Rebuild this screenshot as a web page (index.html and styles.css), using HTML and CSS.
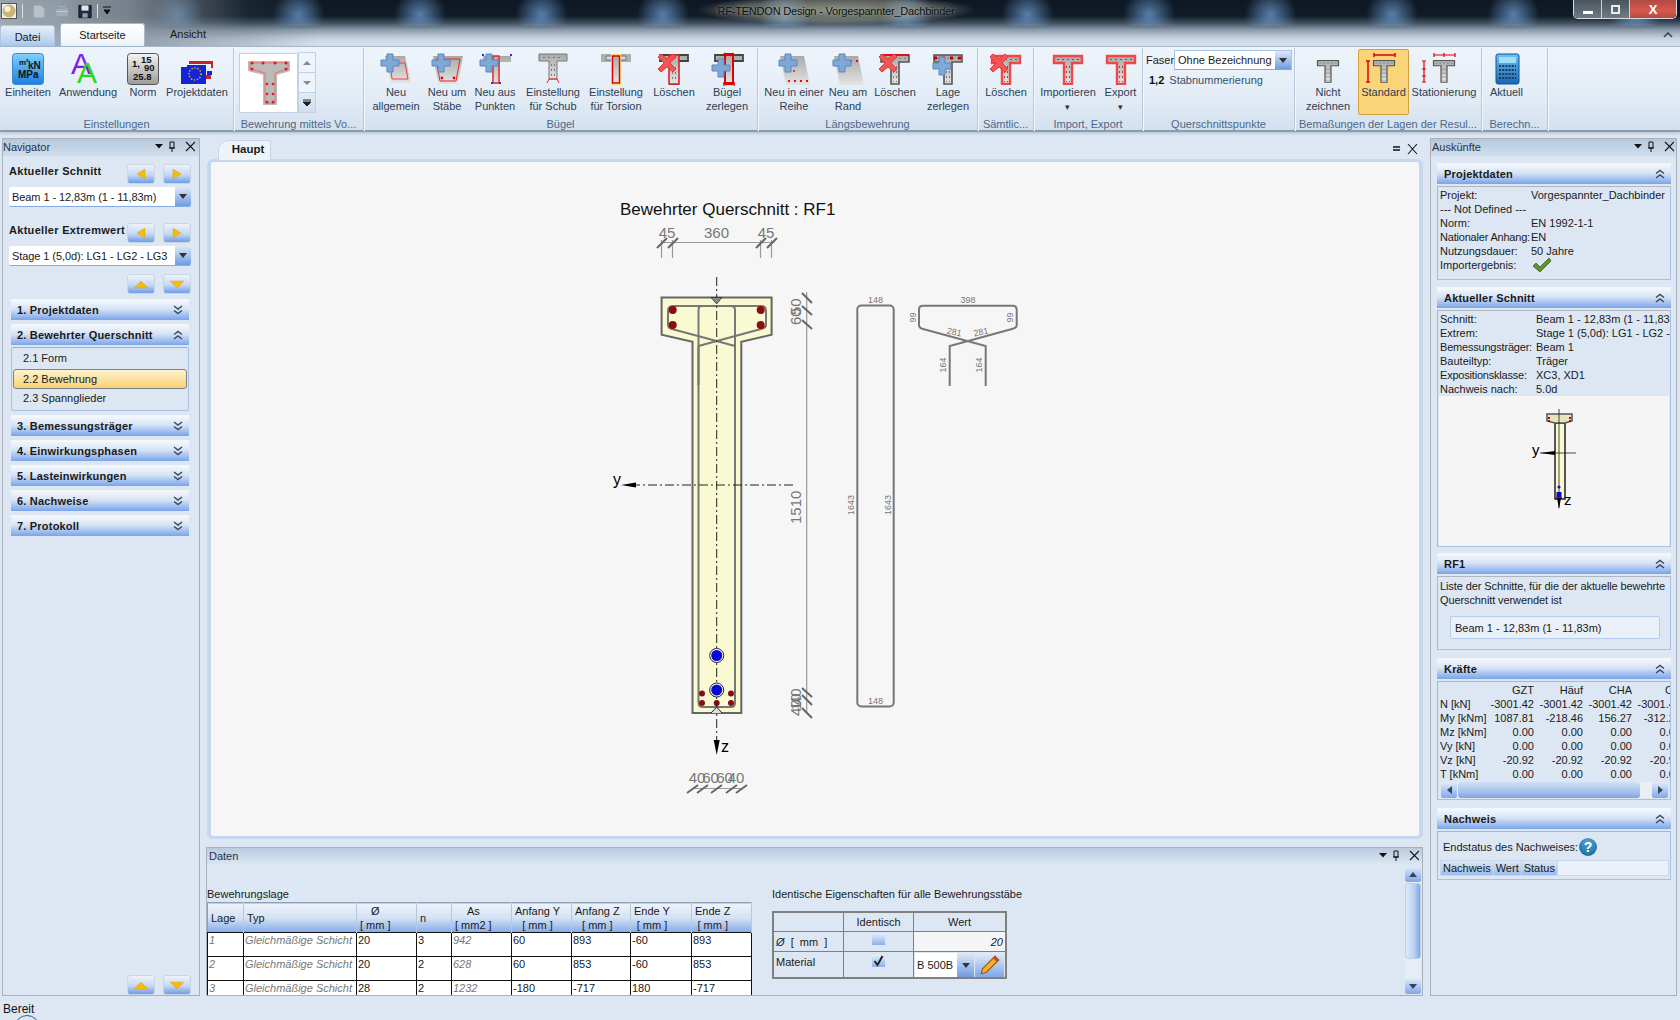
FILE: index.html
```html
<!DOCTYPE html>
<html lang="de">
<head>
<meta charset="utf-8">
<title>RF-TENDON Design - Vorgespannter_Dachbinder</title>
<link rel="stylesheet" href="styles.css">
</head>
<body>
<svg class="sprite" aria-hidden="true">
  <defs>
    <linearGradient id="gGray" x1="0" y1="0" x2="0" y2="1"><stop offset="0" stop-color="#a9a9a9"/><stop offset="1" stop-color="#e4e4e4"/></linearGradient>
    <linearGradient id="gBlue" x1="0" y1="0" x2="0" y2="1"><stop offset="0" stop-color="#7fd0fb"/><stop offset="1" stop-color="#1d7fe0"/></linearGradient>
    <linearGradient id="gNorm" x1="0" y1="0" x2="0" y2="1"><stop offset="0" stop-color="#f4f4f4"/><stop offset="1" stop-color="#9a9a98"/></linearGradient>
    <linearGradient id="gCalc" x1="0" y1="0" x2="0" y2="1"><stop offset="0" stop-color="#6cc2f0"/><stop offset="1" stop-color="#1565b5"/></linearGradient>
  </defs>
  <symbol id="tgray" viewBox="0 0 32 32"><path d="M2 2H30V9H20V31H12V9H2Z" fill="url(#gGray)" stroke="#555" stroke-width="1.600"/><path d="M5 5.500H27M14.500 13V29M17.500 13V29" stroke="#777" stroke-dasharray="2 3" fill="none"/></symbol>
  <symbol id="tred" viewBox="0 0 32 32"><path d="M2 3H30V10H20V31H12V10H2Z" fill="url(#gGray)" stroke="#f04848" stroke-width="2.400"/><path d="M5 6.500H27M14.500 13V29M17.500 13V29" stroke="#d03030" stroke-dasharray="2 3" fill="none"/></symbol>
  <symbol id="plus" viewBox="0 0 32 32"><path d="M7 1H13V7H19V13H13V19H7V13H1V7H7Z" fill="#7da8d8" stroke="#5d88bb"/></symbol>
  <symbol id="xred" viewBox="0 0 32 32"><path d="M3 1L9 6L15 1L18 4L12 10L18 16L15 19L9 14L3 19L0 16L6 10L0 4Z" fill="#f25656" stroke="#e03c3c"/></symbol>
  <symbol id="dchev" viewBox="0 0 10 10"><path d="M1 1L5 4L9 1M1 5.500L5 8.500L9 5.500" fill="none" stroke="#3c4a60" stroke-width="1.500"/></symbol>
  <symbol id="uchev" viewBox="0 0 10 10"><path d="M1 4.500L5 1.500L9 4.500M1 9L5 6L9 9" fill="none" stroke="#3c4a60" stroke-width="1.500"/></symbol>
  <symbol id="pin" viewBox="0 0 40 12"><path d="M0 3H8L4 7.500Z" fill="#111"/><path d="M15 1H19V7H15ZM14 7H20M17 7V11" fill="none" stroke="#111"/><path d="M31 1L40 10M40 1L31 10" stroke="#111" stroke-width="1.100"/></symbol>
</svg>

<div class="app">
  <header class="caption">
    <div class="qat">
      <svg class="orb" viewBox="0 0 16 16"><rect x=".5" y=".5" width="15" height="15" fill="#eef0f0" stroke="#555"/><circle cx="8" cy="8" r="6.500" fill="#c9b676"/><circle cx="6.500" cy="6" r="3" fill="#f8f4dc"/></svg>
      <i class="qsep"></i>
      <svg class="qi" viewBox="0 0 16 16"><path d="M2 1H10L14 5V15H2Z" fill="#b9c2c9" stroke="#a4adb4"/></svg>
      <svg class="qi" viewBox="0 0 16 16"><path d="M1 4H15V14H1ZM3 1H13V4H3Z" fill="#a2acb3" stroke="#8f99a1"/><path d="M1 8H15" stroke="#c7ced3"/></svg>
      <svg class="qi" viewBox="0 0 16 16"><path d="M1 1H15V15H1Z" fill="#1f2b3c" stroke="#0b1018"/><path d="M4 1H12V7H4Z" fill="#dfe6ee"/><path d="M5 10H11V15H5Z" fill="#8fa0b2"/></svg>
      <i class="qsep"></i>
      <svg class="qd" viewBox="0 0 8 10"><path d="M0 1H8M1 4H7L4 8Z" stroke="#111" fill="#111"/></svg>
    </div>
    <div class="wintitle">RF-TENDON Design - Vorgespannter_Dachbinder</div>
    <div class="winbtns">
      <span class="wb wb-min"><i></i></span>
      <span class="wb wb-max"><i></i></span>
      <span class="wb wb-close">X</span>
    </div>
    <nav class="tabs">
      <span class="tab tab-file">Datei</span>
      <span class="tab tab-on">Startseite</span>
      <span class="tab tab-off">Ansicht</span>
      <svg class="collapse" viewBox="0 0 10 8"><path d="M1 6L5 2L9 6" fill="none" stroke="#444" stroke-width="1.600"/></svg>
    </nav>
  </header>

  <section class="ribbon">
    <div class="grp g233">
      <div class="btns">
        <div class="rb w56"><svg class="ico" viewBox="0 0 32 32"><rect x=".5" y=".5" width="31" height="31" rx="3" fill="url(#gBlue)" stroke="#3b8ad0"/><text x="7" y="12" class="t-ico2">m²</text><text x="16" y="16" class="t-ico">kN</text><text x="6" y="25" class="t-ico">MPa</text></svg><span>Einheiten</span></div>
        <div class="rb w64"><svg class="ico" viewBox="0 0 32 32"><text x="-1" y="21" class="t-a1">A</text><text x="5" y="30" class="t-a2">A</text></svg><span>Anwendung</span></div>
        <div class="rb w46"><svg class="ico" viewBox="0 0 32 32"><rect x=".5" y=".5" width="31" height="31" rx="3" fill="url(#gNorm)" stroke="#555"/><text x="5" y="14" class="t-n">1,</text><text x="14" y="10" class="t-n">15</text><text x="17" y="18" class="t-n">90</text><text x="6" y="27" class="t-n">25.8</text></svg><span>Norm</span></div>
        <div class="rb w62"><svg class="ico" viewBox="0 0 32 32"><path d="M8 8H32V15H30V11H8Z" fill="#c6232a"/><path d="M0 14H6V12H25V31H0Z" fill="#1524d6"/><path d="M25 15H32V24H28V28H25Z" fill="#e9eef5"/><path d="M26 18H31V22H26Z" fill="#1524d6"/><path d="M25 22H30V26H25Z" fill="#c6232a"/><circle cx="14" cy="21" r="6" fill="none" stroke="#f5d000" stroke-width="1.400" stroke-dasharray="1.200 1.800"/></svg><span>Projektdaten</span></div>
      </div>
      <div class="glabel">Einstellungen</div>
    </div>

    <div class="grp g131">
      <div class="gallery">
        <div class="gal-pic">
          <svg viewBox="0 0 57 58"><path d="M8 7H50V17L37 21V51H23V21L8 17Z" fill="#bbb"/><path d="M10 9H48V15L35 19V49H25V19L10 15Z" fill="none" stroke="#f07070"/><g fill="#e01c1c"><circle cx="12" cy="9" r="1.500"/><circle cx="23" cy="9" r="1.500"/><circle cx="35" cy="9" r="1.500"/><circle cx="46" cy="9" r="1.500"/><circle cx="12" cy="15" r="1.500"/><circle cx="46" cy="15" r="1.500"/><circle cx="27" cy="30" r="1.300"/><circle cx="33" cy="30" r="1.300"/><circle cx="27" cy="40" r="1.300"/><circle cx="33" cy="40" r="1.300"/><circle cx="27" cy="48" r="1.500"/><circle cx="33" cy="48" r="1.500"/></g></svg>
        </div>
        <div class="gal-btns">
          <span class="gb"><svg viewBox="0 0 8 6"><path d="M0 5H8L4 1Z" fill="#888"/></svg></span>
          <span class="gb"><svg viewBox="0 0 8 6"><path d="M0 1H8L4 5Z" fill="#888"/></svg></span>
          <span class="gb gb-last"><svg viewBox="0 0 8 8"><path d="M0 1H8M0 3H8L4 7Z" stroke="#222" fill="#222"/></svg></span>
        </div>
      </div>
      <div class="glabel">Bewehrung mittels Vo...</div>
    </div>

    <div class="grp g394 pl8">
      <div class="btns">
        <div class="rb w48"><svg class="ico" viewBox="0 0 32 32"><path d="M5 3H25L31 30H11Z" fill="url(#gGray)"/><path d="M10 10H25L28 26H12Z" fill="none" stroke="#f04040"/><use href="#plus" width="32" height="32"/></svg><span>Neu<br>allgemein</span></div>
        <div class="rb w54"><svg class="ico" viewBox="0 0 32 32"><path d="M2 3H32L27 31H7Z" fill="url(#gGray)"/><path d="M5 6H29L25 28H9Z" fill="none" stroke="#f02020"/><circle cx="11" cy="25" r="1.400" fill="#d01010"/><circle cx="23" cy="25" r="1.400" fill="#d01010"/><use href="#plus" width="32" height="32"/></svg><span>Neu um<br>Stäbe</span></div>
        <div class="rb w42"><svg class="ico" viewBox="0 0 32 32"><path d="M4 3H32V9H21V31H13V9H4Z" fill="url(#gGray)"/><path d="M14 3H20V30H14Z" fill="none" stroke="#f02020" stroke-width="1.400"/><path d="M3 1H5V3H3ZM31 1H33V3H31ZM12 29H14V31H12ZM20 29H22V31H20Z" fill="#2030e0"/><use href="#plus" width="32" height="32"/></svg><span>Neu aus<br>Punkten</span></div>
        <div class="rb w74"><svg class="ico" viewBox="0 0 32 32"><path d="M2 1H30V8H20V26H12V8H2Z" fill="url(#gGray)" stroke="#777"/><path d="M6 4.500H26M14.500 11V24M17.500 11V24" stroke="#777" stroke-dasharray="2 3"/><path d="M10 30L12 26H20L22 30" fill="none" stroke="#f02020"/></svg><span>Einstellung<br>für Schub</span></div>
        <div class="rb w52"><svg class="ico" viewBox="0 0 32 32"><path d="M1 1H31V9H1Z" fill="#b0b0b0"/><path d="M6 3H26V7H6Z" fill="#d8d8d8" stroke="#777"/><path d="M11 1H21V32H11Z" fill="#fbe07a"/><path d="M12.500 3H19.500V30H12.500Z" fill="url(#gGray)" stroke="#e00000" stroke-width="1.400"/></svg><span>Einstellung<br>für Torsion</span></div>
        <div class="rb w64"><svg class="ico" viewBox="0 0 32 32"><path d="M2 2H30V8H20V31H12V8H2Z" fill="url(#gGray)" stroke="#444" stroke-width="1.800"/><path d="M11 2H21V31H11Z" fill="url(#gGray)" stroke="#e02020" stroke-width="1.600"/><path d="M14.500 14V28M17.500 14V28" stroke="#777" stroke-dasharray="2 3"/><use href="#xred" width="32" height="32"/></svg><span>Löschen</span></div>
        <div class="rb w42"><svg class="ico" viewBox="0 0 32 32"><path d="M4 2H32V8H22V30H14V8H4Z" fill="url(#gGray)" stroke="#444" stroke-width="1.800"/><path d="M14 1H22V30H14Z" fill="none" stroke="#e00000" stroke-width="2"/><path d="M12 30L24 32M24 30L12 32M13 0L16 3M22 0L19 3" stroke="#e00000" stroke-width="1.500"/><use href="#plus" y="5" width="32" height="32"/></svg><span>Bügel<br>zerlegen</span></div>
      </div>
      <div class="glabel">Bügel</div>
    </div>

    <div class="grp g220 pl4">
      <div class="btns">
        <div class="rb w64"><svg class="ico" viewBox="0 0 32 32"><path d="M2 3H26L32 32H8Z" fill="url(#gGray)"/><circle cx="16" cy="18" r="1" fill="#e01010"/><path d="M10 28H31" stroke="#e01010" stroke-width="2" stroke-dasharray="2 4"/><use href="#plus" width="32" height="32"/></svg><span>Neu in einer<br>Reihe</span></div>
        <div class="rb w44"><svg class="ico" viewBox="0 0 32 32"><path d="M2 3H26L32 32H8Z" fill="url(#gGray)"/><path d="M12 8H26" stroke="#e01010" stroke-width="2" stroke-dasharray="2 4"/><use href="#plus" width="32" height="32"/></svg><span>Neu am<br>Rand</span></div>
        <div class="rb w50"><svg class="ico" viewBox="0 0 32 32"><use href="#tgray" width="32" height="32"/><path d="M3 2H30" stroke="#e01010" stroke-width="2"/><use href="#xred" width="32" height="32"/></svg><span>Löschen</span></div>
        <div class="rb w56"><svg class="ico" viewBox="0 0 32 32"><use href="#tgray" width="32" height="32"/><path d="M2 5H31" stroke="#c00000" stroke-width="3" stroke-dasharray="3 5"/><use href="#plus" y="3" width="32" height="32"/></svg><span>Lage<br>zerlegen</span></div>
      </div>
      <div class="glabel">Längsbewehrung</div>
    </div>

    <div class="grp g56">
      <div class="btns">
        <div class="rb w56"><svg class="ico" viewBox="0 0 32 32"><use href="#tred" width="32" height="32"/><use href="#xred" width="32" height="32"/></svg><span>Löschen</span></div>
      </div>
      <div class="glabel">Sämtlic...</div>
    </div>

    <div class="grp g109 pl2">
      <div class="btns">
        <div class="rb w64"><svg class="ico" viewBox="0 0 32 32"><use href="#tred" width="32" height="32"/></svg><span>Importieren<br><b class="mini">▾</b></span></div>
        <div class="rb w41"><svg class="ico" viewBox="0 0 32 32"><use href="#tred" width="32" height="32"/></svg><span>Export<br><b class="mini">▾</b></span></div>
      </div>
      <div class="glabel">Import, Export</div>
    </div>

    <div class="grp g151">
      <div class="qp-top">
        <div class="qp-line">
          <span class="faser">Faser</span>
          <div class="combo combo-q"><span>Ohne Bezeichnung</span><i class="cbtn"><svg viewBox="0 0 8 5"><path d="M0 0H8L4 5Z"/></svg></i></div>
        </div>
        <div class="qp-num"><b>1,2</b> Stabnummerierung</div>
      </div>
      <div class="glabel">Querschnittspunkte</div>
    </div>

    <div class="grp g187 pl7">
      <div class="btns">
        <div class="rb w52"><svg class="ico" viewBox="0 0 32 32"><use href="#tgray" x="4" y="6" width="24" height="24"/></svg><span>Nicht<br>zeichnen</span></div>
        <div class="rb w51 rb-on"><svg class="ico" viewBox="0 0 32 32"><use href="#tgray" x="4" y="6" width="24" height="24"/><path d="M6 2H27M6 0V4M27 0V4" stroke="#e00000" stroke-width="1.500" fill="none"/><path d="M0 8V29M-2 8H2M-2 29H2" stroke="#e00000" stroke-width="1.500" fill="none"/></svg><span>Standard</span></div>
        <div class="rb w68"><svg class="ico" viewBox="0 0 32 32"><use href="#tgray" x="4" y="6" width="24" height="24"/><path d="M6 2H27M6 0V4M16 0V4M27 0V4" stroke="#e00000" stroke-width="1.200" fill="none"/><path d="M-4 8V29M-6 8H-2M-6 16H-2M-6 23H-2M-6 29H-2" stroke="#e00000" stroke-width="1.200" fill="none"/></svg><span>Stationierung</span></div>
      </div>
      <div class="glabel">Bemaßungen der Lagen der Resul...</div>
    </div>

    <div class="grp g66">
      <div class="btns">
        <div class="rb w49"><svg class="ico" viewBox="0 0 32 32"><rect x="5" y="1" width="23" height="30" rx="2" fill="url(#gCalc)" stroke="#12528f"/><rect x="8" y="4" width="17" height="6" fill="#9fe0f8"/><path d="M8 13H25M8 17H25M8 21H25M8 25H25" stroke="#203c5a" stroke-width="2" stroke-dasharray="2 1.200"/></svg><span>Aktuell</span></div>
      </div>
      <div class="glabel">Berechn...</div>
    </div>
  </section>

  <main class="work">
    <aside class="nav pane">
      <div class="panehead"><span>Navigator</span><svg class="panectl" viewBox="0 0 40 12"><use href="#pin" width="40" height="12"/></svg></div>
      <div class="nav-body">
        <div class="nav-line">
          <b>Aktueller Schnitt</b>
          <div class="arrows">
            <span class="ab"><svg viewBox="0 0 10 10"><path d="M9 0V10L1 5Z"/></svg></span>
            <span class="ab"><svg viewBox="0 0 10 10"><path d="M1 0V10L9 5Z"/></svg></span>
          </div>
        </div>
        <div class="combo combo-n"><span>Beam 1 - 12,83m (1 - 11,83m)</span><i class="cbtn"><svg viewBox="0 0 8 5"><path d="M0 0H8L4 5Z"/></svg></i></div>
        <div class="nav-line nl2">
          <b>Aktueller Extremwert</b>
          <div class="arrows">
            <span class="ab"><svg viewBox="0 0 10 10"><path d="M9 0V10L1 5Z"/></svg></span>
            <span class="ab"><svg viewBox="0 0 10 10"><path d="M1 0V10L9 5Z"/></svg></span>
          </div>
        </div>
        <div class="combo combo-n"><span>Stage 1 (5,0d): LG1 - LG2 - LG3</span><i class="cbtn"><svg viewBox="0 0 8 5"><path d="M0 0H8L4 5Z"/></svg></i></div>
        <div class="arrows arrows-v">
          <span class="ab"><svg viewBox="0 0 12 8"><path d="M0 7H12L6 1Z"/></svg></span>
          <span class="ab"><svg viewBox="0 0 12 8"><path d="M0 1H12L6 7Z"/></svg></span>
        </div>
        <div class="acc">
          <div class="acc-h"><b>1. Projektdaten</b><svg viewBox="0 0 10 10"><use href="#dchev"/></svg></div>
          <div class="acc-h"><b>2. Bewehrter Querschnitt</b><svg viewBox="0 0 10 10"><use href="#uchev"/></svg></div>
          <div class="acc-b">
            <div class="acc-i">2.1 Form</div>
            <div class="acc-i acc-sel">2.2 Bewehrung</div>
            <div class="acc-i">2.3 Spannglieder</div>
          </div>
          <div class="acc-h"><b>3. Bemessungsträger</b><svg viewBox="0 0 10 10"><use href="#dchev"/></svg></div>
          <div class="acc-h"><b>4. Einwirkungsphasen</b><svg viewBox="0 0 10 10"><use href="#dchev"/></svg></div>
          <div class="acc-h"><b>5. Lasteinwirkungen</b><svg viewBox="0 0 10 10"><use href="#dchev"/></svg></div>
          <div class="acc-h"><b>6. Nachweise</b><svg viewBox="0 0 10 10"><use href="#dchev"/></svg></div>
          <div class="acc-h"><b>7. Protokoll</b><svg viewBox="0 0 10 10"><use href="#dchev"/></svg></div>
        </div>
        <div class="arrows arrows-v arrows-end">
          <span class="ab"><svg viewBox="0 0 12 8"><path d="M0 7H12L6 1Z"/></svg></span>
          <span class="ab"><svg viewBox="0 0 12 8"><path d="M0 1H12L6 7Z"/></svg></span>
        </div>
      </div>
    </aside>

    <div class="center">
      <div class="doctabs">
        <span class="doctab">Haupt</span>
        <svg class="docctl" viewBox="0 0 28 12"><path d="M3 4H10M3 7H10" stroke="#111" stroke-width="1.400"/><path d="M18 1L27 11M27 1L18 11" stroke="#111" stroke-width="1.100"/></svg>
      </div>
      <div class="docview">
        <svg class="diagram" viewBox="211 162 1207 674">
          <text x="620" y="215" class="d-title">Bewehrter Querschnitt : RF1</text>

          <g class="d-dimline">
            <path d="M661.500 242.500H771.500M661.500 240V258M672.500 240V258M760.500 240V258M771.500 240V258"/>
          </g>
          <g class="d-slash">
            <path d="M657 248L667 238M668 248L678 238M756 248L766 238M767 248L777 238"/>
          </g>
          <text x="667" y="238" class="d-dim m">45</text>
          <text x="716.500" y="238" class="d-dim m">360</text>
          <text x="766" y="238" class="d-dim m">45</text>

          <path class="d-conc" d="M661.600 297.500H771.600V334.700L741.300 341.700V713H692.500V341.700L661.600 334.700Z"/>
          <g class="d-bar">
            <path d="M761 329Q766 328 766 325V311Q766 306 761 306H673Q668 306 668 311V325Q668 328 672 329L735 346"/>
            <path d="M761 329L698.500 346"/>
            <path d="M698.500 346V385M735 346V385"/>
            <path d="M702 306H731Q735 306 735 310V703Q735 707 731 707H703Q698.500 707 698.500 703V310Q698.500 306 702 306Z"/>
          </g>
          <g fill="#8b0d0d">
            <circle cx="672.700" cy="310" r="4"/><circle cx="672.700" cy="325" r="4"/>
            <circle cx="760.700" cy="310" r="4"/><circle cx="760.700" cy="325" r="4"/>
            <circle cx="702" cy="693.500" r="3"/><circle cx="702" cy="703" r="3"/>
            <circle cx="716.700" cy="703" r="3"/>
            <circle cx="731" cy="693.500" r="3"/><circle cx="731" cy="703" r="3"/>
          </g>
          <path class="d-axis" d="M716.700 277V740M793 485H635"/>
          <path d="M711 297.500H722L716.700 304Z" fill="#888" stroke="#222" stroke-width=".7"/>
          <path d="M711 713L716.700 707L722 713" fill="#ddd" stroke="#222"/>
          <circle cx="716.700" cy="655.500" r="7" fill="#fff" stroke="#222"/><circle cx="716.700" cy="655.500" r="5.500" fill="#0808d8"/>
          <circle cx="716.700" cy="690" r="7" fill="#fff" stroke="#222"/><circle cx="716.700" cy="690" r="5.500" fill="#0808d8"/>
          <path d="M713.700 740H719.700L716.700 755Z" fill="#000"/>
          <path d="M636 482.500V487.500L621 485Z" fill="#000"/>
          <text x="613" y="485" class="d-axt">y</text>
          <text x="721" y="752" class="d-axt">z</text>

          <g class="d-dimline"><path d="M806.700 292V712"/></g>
          <g class="d-slash"><path d="M802 293L812 303M802 306L812 315M802 320L812 329M802 688L812 697M802 695L812 705M802 708L812 718"/></g>
          <text class="d-dim" transform="translate(801 325) rotate(-90)">60</text>
          <text class="d-dim" transform="translate(801 315) rotate(-90)">50</text>
          <text class="d-dim" transform="translate(801 524) rotate(-90)">1510</text>
          <text class="d-dim" transform="translate(801 716) rotate(-90)">40</text>
          <text class="d-dim" transform="translate(801 710) rotate(-90)">10</text>
          <text class="d-dim" transform="translate(801 705) rotate(-90)">40</text>

          <g class="d-dimline"><path d="M692 788.500H741"/></g>
          <g class="d-slash"><path d="M687 793L698 785M697 793L708 785M711 793L722 785M726 793L737 785M736 793L747 785"/></g>
          <text x="697" y="783" class="d-dim m">40</text>
          <text x="710.500" y="783" class="d-dim m">60</text>
          <text x="724.500" y="783" class="d-dim m">60</text>
          <text x="736" y="783" class="d-dim m">40</text>

          <g class="d-bar">
            <rect x="857.300" y="305.500" width="36.400" height="401" rx="4"/>
            <path d="M923 305.700H1012.700Q1016.700 305.700 1016.700 309.700V325Q1016.700 328 1012 329L949.700 346V386"/>
            <path d="M923 305.700Q919 305.700 919 309.700V325Q919 328 923 329L985.700 346V386"/>
          </g>
          <text x="875.500" y="303" class="d-sm m">148</text>
          <text x="875.500" y="704" class="d-sm m">148</text>
          <text class="d-sm m" transform="translate(854 505) rotate(-90)">1643</text>
          <text class="d-sm m" transform="translate(891 505) rotate(-90)">1643</text>
          <text x="968" y="303" class="d-sm m">398</text>
          <text class="d-sm m" transform="translate(916 317.500) rotate(-90)">99</text>
          <text class="d-sm m" transform="translate(1013 317.500) rotate(-90)">99</text>
          <text class="d-sm m" transform="translate(953.500 335) rotate(12)">281</text>
          <text class="d-sm m" transform="translate(981.500 335) rotate(-12)">281</text>
          <text class="d-sm m" transform="translate(946 365) rotate(-90)">164</text>
          <text class="d-sm m" transform="translate(982 365) rotate(-90)">164</text>
        </svg>
      </div>
      <section class="data pane">
        <div class="panehead data-head"><span>Daten</span><svg class="panectl" viewBox="0 0 40 12"><use href="#pin" width="40" height="12"/></svg></div>
        <div class="data-body">
          <div class="data-left">
            <div class="d-cap">Bewehrungslage</div>
            <table class="rt">
              <colgroup><col class="c36"><col class="c113"><col class="c60"><col class="c35"><col class="c60"><col class="c60"><col class="c59"><col class="c61"><col class="c60"></colgroup>
              <thead>
                <tr><th>Lage</th><th>Typ</th><th><span>Ø<br>[ mm ]</span></th><th>n</th><th><span>As<br>[ mm2 ]</span></th><th><span>Anfang Y<br>[ mm ]</span></th><th><span>Anfang Z<br>[ mm ]</span></th><th><span>Ende Y<br>[ mm ]</span></th><th><span>Ende Z<br>[ mm ]</span></th></tr>
              </thead>
              <tbody>
                <tr><td class="it">1</td><td class="it">Gleichmäßige Schicht</td><td>20</td><td>3</td><td class="it">942</td><td>60</td><td>893</td><td>-60</td><td>893</td></tr>
                <tr><td class="it">2</td><td class="it">Gleichmäßige Schicht</td><td>20</td><td>2</td><td class="it">628</td><td>60</td><td>853</td><td>-60</td><td>853</td></tr>
                <tr><td class="it">3</td><td class="it">Gleichmäßige Schicht</td><td>28</td><td>2</td><td class="it">1232</td><td>-180</td><td>-717</td><td>180</td><td>-717</td></tr>
              </tbody>
            </table>
          </div>
          <div class="data-right">
            <div class="d-cap">Identische Eigenschaften für alle Bewehrungsstäbe</div>
            <div class="props">
              <div class="pc"></div><div class="pc pch">Identisch</div><div class="pc pch">Wert</div>
              <div class="pc pl"><i>Ø</i>&nbsp; [&nbsp; mm&nbsp; ]</div><div class="pc pck pck1"><i class="chk"></i></div><div class="pc pval pl">20</div>
              <div class="pc pl">Material</div><div class="pc pck pck2"><i class="chk"><svg viewBox="0 0 12 12"><path d="M2 6L5 10L10 1" fill="none" stroke="#222" stroke-width="2"/></svg></i></div>
              <div class="pc pmat"><span>B 500B</span><i class="cbtn"><svg viewBox="0 0 8 5"><path d="M0 0H8L4 5Z"/></svg></i><i class="penb"><svg viewBox="0 0 16 16"><path d="M12 1L15 4L5 14L1 15L2 11Z" fill="#f0b040" stroke="#a06010"/><path d="M12 1L15 4L13.500 5.500L10.500 2.500Z" fill="#d04040"/></svg></i></div>
            </div>
          </div>
          <div class="vscroll">
            <span class="sb-btn"><svg viewBox="0 0 8 5"><path d="M0 5H8L4 0Z"/></svg></span>
            <span class="sb-thumb"></span>
            <span class="sb-btn sb-end"><svg viewBox="0 0 8 5"><path d="M0 0H8L4 5Z"/></svg></span>
          </div>
        </div>
      </section>
    </div>

    <aside class="info pane">
      <div class="panehead"><span>Auskünfte</span><svg class="panectl" viewBox="0 0 40 12"><use href="#pin" width="40" height="12"/></svg></div>
      <div class="info-body">
        <div class="sec s1">
          <div class="sec-h"><b>Projektdaten</b><svg viewBox="0 0 10 10"><use href="#uchev"/></svg></div>
          <div class="sec-b kv k90">
            <span>Projekt:</span><span>Vorgespannter_Dachbinder</span>
            <span class="full">--- Not Defined ---</span>
            <span>Norm:</span><span>EN 1992-1-1</span>
            <span class="tight">Nationaler Anhang:</span><span>EN</span>
            <span>Nutzungsdauer:</span><span>50 Jahre</span>
            <span>Importergebnis:</span><span><svg class="okmark" viewBox="0 0 20 16"><path d="M1 9L4 6L8 10L17 1L19 4L8 15Z" fill="#5e9430" stroke="#4a7a22"/></svg></span>
          </div>
        </div>
        <div class="sec s2">
          <div class="sec-h"><b>Aktueller Schnitt</b><svg viewBox="0 0 10 10"><use href="#uchev"/></svg></div>
          <div class="sec-b">
            <div class="kv k94">
              <span>Schnitt:</span><span>Beam 1 - 12,83m (1 - 11,83m)</span>
              <span>Extrem:</span><span>Stage 1 (5,0d): LG1 - LG2 - LG3</span>
              <span class="tight">Bemessungsträger:</span><span>Beam 1</span>
              <span>Bauteiltyp:</span><span>Träger</span>
              <span class="tight">Expositionsklasse:</span><span>XC3, XD1</span>
              <span>Nachweis nach:</span><span>5.0d</span>
            </div>
            <div class="mini-pic">
              <svg viewBox="0 0 230 150">
                <path d="M116 27H126V103H116Z" fill="#f9f9d0" stroke="#222" stroke-width="1.500"/>
                <path d="M108 18H133V25L126 27H116L108 25Z" fill="#e8e4c0" stroke="#555" stroke-width="1.500"/>
                <path d="M120 13V112M101 57H137" stroke="#222" stroke-width=".8"/>
                <path d="M110 21V26M131 21V26" stroke="#a01010" stroke-width="2" stroke-dasharray="2 1"/>
                <path d="M116 55V59L101 57Z" fill="#000"/>
                <circle cx="120" cy="91" r="1.600" fill="#1010d0"/><rect x="117.500" y="96" width="5" height="6" fill="#0808c0"/>
                <path d="M117 102H123" stroke="#a01010" stroke-width="2"/>
                <path d="M118 102H122L120 113Z" fill="#000"/>
                <text x="93" y="59" class="d-axm">y</text><text x="125" y="109" class="d-axm">z</text>
              </svg>
            </div>
          </div>
        </div>
        <div class="sec s3">
          <div class="sec-h"><b>RF1</b><svg viewBox="0 0 10 10"><use href="#uchev"/></svg></div>
          <div class="sec-b rf">
            <p>Liste der Schnitte, für die der aktuelle bewehrte<br>Querschnitt verwendet ist</p>
            <div class="rf-box">Beam 1 - 12,83m (1 - 11,83m)</div>
          </div>
        </div>
        <div class="sec s4">
          <div class="sec-h"><b>Kräfte</b><svg viewBox="0 0 10 10"><use href="#uchev"/></svg></div>
          <div class="sec-b">
            <div class="forces">
              <span></span><span>GZT</span><span>Häuf</span><span>CHA</span><span>CH</span>
              <span>N [kN]</span><span>-3001.42</span><span>-3001.42</span><span>-3001.42</span><span>-3001.42</span>
              <span>My [kNm]</span><span>1087.81</span><span>-218.46</span><span>156.27</span><span>-312.27</span>
              <span>Mz [kNm]</span><span>0.00</span><span>0.00</span><span>0.00</span><span>0.00</span>
              <span>Vy [kN]</span><span>0.00</span><span>0.00</span><span>0.00</span><span>0.00</span>
              <span>Vz [kN]</span><span>-20.92</span><span>-20.92</span><span>-20.92</span><span>-20.92</span>
              <span>T [kNm]</span><span>0.00</span><span>0.00</span><span>0.00</span><span>0.00</span>
            </div>
            <div class="hscroll">
              <span class="hb"><svg viewBox="0 0 5 8"><path d="M5 0V8L0 4Z"/></svg></span>
              <span class="hthumb"></span>
              <span class="hb"><svg viewBox="0 0 5 8"><path d="M0 0V8L5 4Z"/></svg></span>
            </div>
          </div>
        </div>
        <div class="sec s5">
          <div class="sec-h"><b>Nachweis</b><svg viewBox="0 0 10 10"><use href="#uchev"/></svg></div>
          <div class="sec-b">
            <div class="end-line"><span>Endstatus des Nachweises:</span><i class="help">?</i></div>
            <div class="nw"><span>Nachweis</span><span>Wert</span><span>Status</span></div>
          </div>
        </div>
      </div>
    </aside>
  </main>

  <footer class="status"><span>Bereit</span><i class="arc"></i></footer>
</div>
</body>
</html>
```
FILE: styles.css
```css
* { box-sizing: border-box; }
html, body { margin: 0; padding: 0; }
body { width: 1680px; height: 1020px; overflow: hidden; background: #dce7f3; font: 11px "Liberation Sans", Arial, sans-serif; color: #1a1a1a; }
.sprite { position: absolute; width: 0; height: 0; }
.app { width: 1680px; height: 1020px; display: flex; flex-direction: column; }

/* caption */
.caption { position: relative; height: 46px; flex: none; display: flex; flex-direction: column; justify-content: flex-end;
  background:
    linear-gradient(90deg, rgba(170,180,188,.9) 0, rgba(135,146,156,.85) 130px, rgba(60,76,92,.2) 250px, transparent 320px),
    radial-gradient(ellipse 140px 15px at 836px 10px, rgba(175,175,155,.8), rgba(175,175,155,.45) 70%, rgba(175,175,155,0)),
    radial-gradient(circle 26px at 57px 15px, rgba(110,160,215,.75), rgba(110,160,215,0)) 120px 0 / 121.500px 26px repeat-x,
    linear-gradient(#0e1824 0, #111c28 16px, #40505f 23px, #8c9cad 30px, #c4d1de 38px, #dde7f2 46px);
}
.qat { position: absolute; left: 1px; top: 3px; display: flex; align-items: center; gap: 5px; }
.orb { width: 16px; height: 16px; }
.qsep { width: 1px; height: 14px; background: #dde2e6; }
.qi { width: 14px; height: 15px; margin-left: 4px; }
.qd { width: 8px; height: 10px; }
.wintitle { position: absolute; left: 0; right: 8px; top: 5px; text-align: center; font-size: 11px; letter-spacing: -.2px; color: #0c1014; text-shadow: 0 0 3px rgba(185,185,165,.7); }
.winbtns { position: absolute; right: 3px; top: 0; display: flex; height: 19px; border: 1px solid #d6dde3; border-top: 0; border-radius: 0 0 5px 5px; overflow: hidden; }
.wb { width: 28px; background: linear-gradient(#48545e, #6f7b85); border-right: 1px solid #cdd5da; display: flex; align-items: center; justify-content: center; color: #fff; }
.wb-min i { width: 10px; height: 3px; background: #fff; margin-top: 6px; }
.wb-max i { width: 9px; height: 9px; border: 2px solid #e8ecef; }
.wb-close { width: 46px; border: 0; background: linear-gradient(#b04a44, #d8584c 60%, #b24a42); font-weight: bold; font-size: 13px; }
.tabs { position: relative; display: flex; align-items: flex-end; height: 24px; }
.tab { display: flex; align-items: center; justify-content: center; font-size: 11px; }
.tab-file { width: 55px; height: 21px; padding-top: 2px; background: linear-gradient(#e6eff9, #abc9ef); border: 1px solid #b0c4da; border-bottom: 0; border-radius: 3px 3px 0 0; }
.tab-on { width: 85px; height: 24px; padding-bottom: 2px; margin-left: 5px; background: linear-gradient(#ffffff, #edf3fa); border: 1px solid #a4b8ce; border-bottom: 0; border-radius: 3px 3px 0 0; position: relative; top: 1px; }
.tab-off { width: 86px; height: 23px; padding-bottom: 2px; }
.collapse { position: absolute; right: 7px; top: 9px; width: 10px; height: 8px; }

/* ribbon */
.ribbon { height: 86px; flex: none; display: flex; background: linear-gradient(#eef4fb, #e3ecf6 60%, #d3e0ee); border-top: 1px solid #a2b6cc; border-bottom: 2px solid #8a9bae; box-shadow: 0 1px 3px rgba(110,130,150,.4); position: relative; z-index: 1; }
.grp { position: relative; height: 83px; border-right: 1px solid #b7c8da; box-shadow: 1px 0 0 #f2f7fc; display: flex; flex-direction: column; margin-top: 1px; flex: none; }
.g233 { width: 234px; } .g131 { width: 130px; } .g394 { width: 394px; } .g220 { width: 220px; } .g56 { width: 56px; }
.g109 { width: 109px; } .g151 { width: 152px; } .g187 { width: 187px; } .g66 { width: 66px; }
.pl8 { padding-left: 8px; } .pl4 { padding-left: 4px; } .pl2 { padding-left: 2px; } .pl7 { padding-left: 7px; }
.btns { display: flex; height: 69px; padding-top: 2px; }
.rb { height: 66px; flex: none; display: flex; flex-direction: column; align-items: center; text-align: center; padding-top: 3px; white-space: nowrap; color: #2c3d54; line-height: 14px; }
.rb-on { background: linear-gradient(#fbd379, #fad67a); border: 1px solid #d39f3c; border-radius: 2px; margin: -1px 1px 0 4px; }
.ico { width: 32px; height: 32px; display: block; overflow: visible; }
.w41 { width: 41px; } .w42 { width: 42px; } .w44 { width: 44px; } .w46 { width: 46px; } .w48 { width: 48px; } .w49 { width: 49px; } .w50 { width: 50px; } .w51 { width: 51px; }
.w52 { width: 52px; } .w54 { width: 54px; } .w56 { width: 56px; } .w62 { width: 62px; } .w64 { width: 64px; } .w68 { width: 68px; } .w74 { width: 74px; }
.glabel { position: absolute; left: 0; right: 0; bottom: 0; text-align: center; color: #4e6788; white-space: nowrap; line-height: 14px; }
.mini { font-size: 9px; font-weight: normal; color: #333; }
.t-ico { font: bold 10px "Liberation Sans", sans-serif; fill: #111; }
.t-ico2 { font: bold 8px "Liberation Sans", sans-serif; fill: #111; }
.t-a1 { font: 30px "Liberation Sans", sans-serif; fill: #7b22f0; }
.t-a2 { font: 30px "Liberation Sans", sans-serif; fill: #28d820; }
.t-n { font: bold 9.500px "Liberation Sans", sans-serif; fill: #111; }

.gallery { display: flex; margin: 5px 0 0 5px; width: 77px; height: 60px; }
.gal-pic { width: 59px; height: 60px; background: #fff; border: 1px solid #c3d2e3; }
.gal-pic svg { width: 57px; height: 58px; display: block; }
.gal-btns { width: 18px; display: flex; flex-direction: column; }
.gb { flex: 1; border: 1px solid #c3d2e3; background: #eef4fb; margin-top: -1px; display: flex; align-items: center; justify-content: center; }
.gb svg { width: 8px; height: 6px; }
.gb-last { background: linear-gradient(#e2ecf7, #cfdff1); }
.gb-last svg { height: 8px; }

.qp-top { padding: 2px 2px 0 3px; }
.qp-line { display: flex; align-items: center; }
.faser { width: 28px; color: #222; }
.combo { display: flex; background: #fff; overflow: hidden; }
.combo > span { flex: 1; white-space: nowrap; overflow: hidden; padding-left: 3px; }
.combo-q { width: 118px; height: 20px; line-height: 19px; border: 1px solid #a5c3eb; border-bottom-color: #7ea8e4; }
.cbtn { width: 16px; flex: none; display: flex; align-items: center; justify-content: center; background: linear-gradient(#dfe9f6, #6f9be3); }
.cbtn svg { width: 8px; height: 5px; fill: #333; }
.qp-num { margin-top: 4px; padding-left: 3px; color: #34506f; }
.qp-num b { color: #111; margin-right: 2px; }

/* work */
.work { flex: 1; display: flex; min-height: 0; padding: 6px 3px 4px 2px; }
.pane { border: 1px solid #a9b0b8; border-top: 0; display: flex; flex-direction: column; }
.panehead { height: 18px; flex: none; display: flex; align-items: center; justify-content: space-between; padding: 0 3px 1px 1px; color: #23334a; background: linear-gradient(#b5c8dc, #cfdeed); border-top: 1px solid #a9b0b8; }
.panectl { width: 40px; height: 12px; flex: none; }
.nav .panehead { padding-left: 0; padding-right: 4px; }
.info .panehead { padding-right: 2px; }

.nav { width: 198px; flex: none; }
.nav-body { flex: 1; display: flex; flex-direction: column; padding: 8px 8px 0 6px; }
.nav-line { display: flex; justify-content: space-between; height: 23px; }
.nav-line b { padding-top: 1px; letter-spacing: .3px; white-space: nowrap; }
.nl2 { margin-top: 16px; }
.arrows { display: flex; gap: 8px; flex: none; }
.nl2 .arrows { margin-left: -9px; }
.ab { width: 28px; height: 20px; border: 1px solid #c9d6e6; border-radius: 3px; background: linear-gradient(#eef3fa, #c5d8f2 55%, #6f9de6); display: flex; align-items: center; justify-content: center; }
.ab svg { width: 10px; height: 10px; fill: #f7bb0c; stroke: #d79b00; stroke-width: .4; }
.arrows-v { align-self: flex-end; margin-top: 8px; }
.arrows-v svg { width: 14px; height: 9px; }
.arrows-end { margin-top: auto; }
.combo-n { width: 182px; height: 20px; line-height: 20px; border-radius: 2px; border-bottom: 1px solid #85abe6; }
.combo-n > span { letter-spacing: -.08px; }
.acc { margin: 5px 2px 0 2px; display: flex; flex-direction: column; }
.acc-h { height: 21px; margin-bottom: 4px; padding: 0 6px 0 6px; display: flex; align-items: center; justify-content: space-between; background: linear-gradient(#f5f8fc, #d6e3f5 45%, #7aa4ea); border-top: 1px solid #f2f6fb; }
.acc-h b { letter-spacing: .2px; }
.acc-h svg, .sec-h svg { width: 10px; height: 10px; flex: none; }
.acc-b { height: 64px; margin: -2px 0 4px 0; border: 1px solid #a9c0e2; border-top-color: #aab2bc; border-radius: 2px; padding: 1px; }
.acc-i { height: 20px; line-height: 19px; padding-left: 10px; }
.acc-sel { background: linear-gradient(#fbf3d0, #fbd272); border: 1px solid #7c8088; border-radius: 3px; padding-left: 9px; line-height: 18px; }

/* center */
.center { flex: 1; min-width: 0; display: flex; flex-direction: column; margin: 0 7px 0 6px; }
.doctabs { height: 21px; flex: none; display: flex; justify-content: space-between; align-items: flex-start; padding: 2px 5px 0 12px; position: relative; z-index: 1; }
.doctab { width: 53px; height: 20px; padding-left: 7px; text-align: center; font-weight: bold; font-size: 11.500px; line-height: 17px; background: #eef3f9; border: 1px solid #c6d6e8; border-bottom: 0; border-radius: 10px 3px 0 0; }
.docctl { width: 28px; height: 12px; margin-top: 3px; }
.docview { height: 680px; flex: none; margin-left: 1px; background: #f6f6f6; border: 3px solid #c6d7f0; border-left-width: 4px; border-right-width: 4px; border-radius: 6px; overflow: hidden; }
.diagram { display: block; width: 1207px; height: 674px; }
.d-title { font: 17px "Liberation Sans", sans-serif; fill: #111; }
.d-dim { font: 15px "Liberation Sans", sans-serif; fill: #777; }
.d-sm { font: 9px "Liberation Sans", sans-serif; fill: #777; }
.m { text-anchor: middle; }
.d-dimline path { stroke: #999; stroke-width: 1.200; fill: none; }
.d-slash path { stroke: #666; stroke-width: 2; fill: none; }
.d-conc { fill: #f9f9d2; stroke: #666; stroke-width: 2; }
.d-bar path, .d-bar rect { fill: none; stroke: #777; stroke-width: 2; }
.d-axis { stroke: #222; stroke-width: 1; stroke-dasharray: 9 3 2 3; fill: none; }
.d-axt { font: 16px "Liberation Sans", sans-serif; fill: #000; }
.d-axm { font: 15px "Liberation Sans", sans-serif; fill: #000; }

.data { margin-top: 8px; flex: 1; min-height: 0; overflow: hidden; }
.data .data-head { background: linear-gradient(#b9cbde, #dce7f3); padding-left: 2px; }
.data-body { flex: 1; display: flex; min-height: 0; overflow: hidden; position: relative; }
.d-cap { height: 15px; line-height: 14px; margin-top: 22px; white-space: nowrap; }
.data-left { width: 546px; flex: none; }
.rt { border-collapse: collapse; table-layout: fixed; width: 544px; border: 1px solid #8ba0b8; font-size: 11px; }
.c36 { width: 36px; } .c113 { width: 113px; } .c60 { width: 60px; } .c35 { width: 35px; } .c59 { width: 59px; } .c61 { width: 61px; }
.rt th { height: 30px; font-weight: normal; padding: 1px 0 0 3px; text-align: left; line-height: 14px; background: linear-gradient(#eef3fa, #d5e2f4 50%, #83aaea); border-right: 1px solid #b6c8de; }
.rt th span { display: inline-block; text-align: center; }
.rt td { height: 24px; background: #fff; border: 1px solid #111; padding: 1px 0 0 1px; line-height: 13px; white-space: nowrap; overflow: hidden; vertical-align: top; }
.rt .it { font-style: italic; color: #777; }
.data-right { width: 300px; margin-left: 19px; flex: none; }
.props { margin-top: 9px; width: 235px; height: 68px; border: 2px solid #808080; display: grid; grid-template-columns: 70px 70px 1fr; grid-template-rows: 19px 20px 1fr; }
.pc { border-right: 1px solid #808080; border-bottom: 1px solid #808080; line-height: 19px; padding: 0 2px; text-align: left; }
.pc:nth-child(3n) { border-right: 0; }
.pc:nth-last-child(-n+3) { border-bottom: 0; }
.pch { text-align: center; }
.pl { line-height: 21px; }
.pck { display: flex; justify-content: center; }
.pck1 { padding-top: 1px; }
.pck2 { padding-top: 3px; }
.chk { width: 13px; height: 12px; background: linear-gradient(#e6eef8, #8cb0ec); display: block; }
.chk svg { display: block; width: 13px; height: 12px; }
.pval { text-align: right; font-style: italic; background: #f3f5f7; }
.pmat { display: flex; padding: 1px 0 0 1px; }
.pmat > span { width: 42px; height: 24px; background: #fff; padding-left: 2px; line-height: 25px; }
.pmat .cbtn { width: 17px; height: 24px; }
.penb { width: 29px; height: 24px; margin-left: 1px; background: linear-gradient(#e3ecf8, #7fa7ea); display: flex; align-items: center; justify-content: center; }
.penb svg { width: 20px; height: 20px; }
.vscroll { position: absolute; right: 1px; top: 1px; bottom: 1px; width: 16px; display: flex; flex-direction: column; background: #e6edf6; }
.sb-btn { height: 16px; background: linear-gradient(#e3ecf8, #7fa7ea); border-radius: 2px; display: flex; align-items: center; justify-content: center; }
.sb-btn svg { width: 8px; height: 5px; fill: #33465e; }
.sb-thumb { height: 76px; margin-top: 1px; background: linear-gradient(90deg, #e0eafa, #b8cff1 60%, #7da6ea); border-radius: 3px; border: 1px solid #bcd0ea; }
.sb-end { margin-top: auto; }

/* info */
.info { width: 247px; flex: none; }
.info-body { flex: 1; padding: 7px 5px 0 6px; display: flex; flex-direction: column; }
.sec { display: flex; flex-direction: column; flex: none; }
.s1 { height: 117px; margin-bottom: 7px; } .s2 { height: 260px; margin-bottom: 6px; } .s3 { height: 97px; margin-bottom: 8px; } .s4 { height: 142px; margin-bottom: 8px; } .s5 { height: 72px; }
.sec-h { height: 21px; flex: none; display: flex; align-items: center; justify-content: space-between; padding: 0 6px 0 7px; background: linear-gradient(#f5f8fc, #d6e3f5 45%, #7aa4ea); border-top: 1px solid #f2f6fb; }
.sec-h b { letter-spacing: .2px; }
.sec-b { flex: 1; min-height: 0; margin-top: 2px; border: 1px solid #a7c0e8; border-top-color: #b0b6bd; border-left-color: #aab8c8; overflow: hidden; padding: 0 2px; }
.kv { display: grid; grid-auto-rows: 14px; align-items: center; white-space: nowrap; }
.sec-b.kv { padding-top: 1px; }
.k90 { grid-template-columns: 91px 1fr; }
.k94 { grid-template-columns: 96px 1fr; padding-top: 1px; }
.kv .full { grid-column: 1 / 3; }
.tight { letter-spacing: -.2px; }
.okmark { width: 20px; height: 16px; display: block; margin: 0 0 0 1px; }
.mini-pic { height: 151px; margin: 0 -1px; background: #f5f5f5; }
.mini-pic svg { display: block; width: 230px; height: 150px; }
.rf p { margin: 2px 0 0; line-height: 14px; white-space: nowrap; letter-spacing: -.1px; }
.rf-box { width: 210px; height: 23px; margin: 9px 0 0 10px; border: 1px solid #b6cdee; border-radius: 2px; background: #e9f0f8; line-height: 22px; padding-left: 4px; }
.forces { display: grid; grid-template-columns: 45px 49px 49px 49px 49px; grid-auto-rows: 14px; white-space: nowrap; width: 241px; padding-top: 1px; align-items: center; }
.forces span:not(:nth-child(5n+1)) { text-align: right; }
.hscroll { display: flex; height: 16px; margin: 1px 0 0 1px; width: 227px; background: #eaeff6; }
.hb { width: 16px; background: linear-gradient(#e3ecf8, #7fa7ea); border-radius: 2px; display: flex; align-items: center; justify-content: center; flex: none; }
.hb svg { width: 5px; height: 8px; fill: #33465e; }
.hb:last-child { margin-left: auto; }
.hthumb { width: 182px; margin-left: 1px; background: linear-gradient(#cfe0f7, #9dbbe9 70%, #7ea4e2); border-radius: 3px; }
.end-line { display: flex; align-items: center; height: 28px; padding: 1px 0 0 3px; }
.help { width: 18px; height: 18px; border-radius: 50%; background: radial-gradient(circle at 50% 25%, #4ea6d8, #15608f); color: #fff; font: bold 14px/18px "Liberation Sans", sans-serif; text-align: center; margin-left: 1px; }
.nw { display: flex; height: 16px; background: #e9f0f8; border: 1px solid #c9d8ea; line-height: 15px; width: 229px; }
.nw span { padding: 0 2px; background: linear-gradient(#dce7f6, #9cbcec); border-right: 1px solid #c7d6ea; }

.status { height: 20px; flex: none; position: relative; padding: 2px 0 0 3px; font-size: 12px; color: #111; overflow: hidden; }
.arc { position: absolute; left: 14px; top: 15px; width: 26px; height: 26px; border: 1px solid #2a6090; border-radius: 50%; }
```
